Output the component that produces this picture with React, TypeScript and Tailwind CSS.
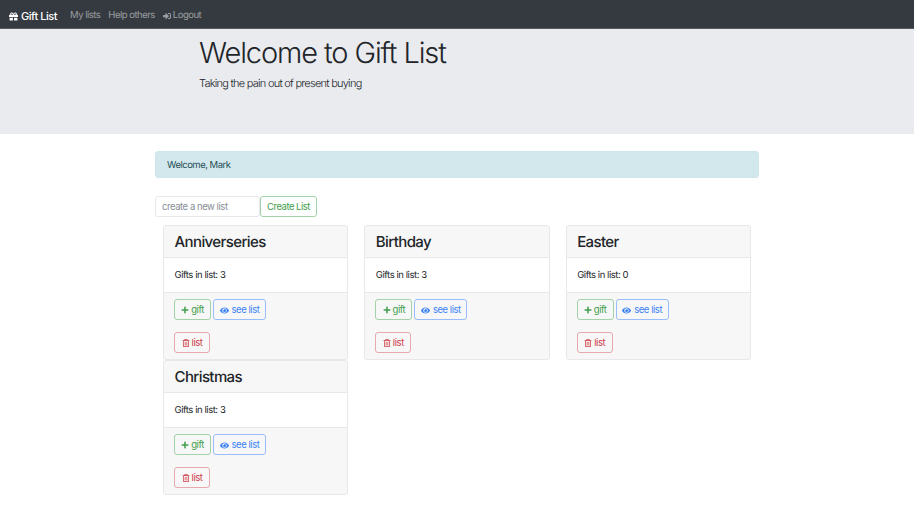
import { FaGift, FaPlus, FaEye, FaRegTrashAlt, FaSignInAlt } from "react-icons/fa";

const lists = [
  { name: "Anniverseries", count: 3 },
  { name: "Birthday", count: 3 },
  { name: "Easter", count: 0 },
  { name: "Christmas", count: 3 },
];

const ListCard = ({ name, count }: { name: string; count: number }) => (
  <div className="mx-2 h-[135px] rounded-[3px] border border-[#e8e8e8] bg-[#f7f7f7]">
    <div className="h-[31px] px-[10.5px] pt-[5px] text-[15px] leading-[22px] font-medium tracking-[-0.6px] text-[#212529]">{name}</div>
    <div className="h-[36px] border-y border-[#e8e8e8] bg-white px-[10.5px] pt-[11px] text-[9.5px] leading-[14px] tracking-[-0.44px] text-[#212529]">
      Gifts in list: {count}
    </div>
    <div className="flex gap-[2px] px-[10px] pt-[6px] text-[9.5px] tracking-[-0.45px]">
      <button className="flex h-[21px] w-[37px] items-center justify-center gap-[2px] rounded-[3px] border border-[#a3d1a9] pt-[1px] text-[#3f9e4b]">
        <FaPlus className="h-[8px] w-[8px]" /> gift
      </button>
      <button className="flex h-[21px] w-[53px] items-center justify-center gap-[3px] rounded-[3px] border border-[#99bdfb] pt-[1px] text-[#3b82f6]">
        <FaEye className="h-[9px] w-[9px]" /> see list
      </button>
    </div>
    <div className="flex px-[10px] pt-[12px] text-[9.5px] tracking-[-0.45px]">
      <button className="flex h-[21px] w-[36px] items-center justify-center gap-[2px] rounded-[3px] border border-[#e8a9ae] pt-[1px] text-[#d0404c]">
        <FaRegTrashAlt className="h-[8px] w-[8px]" /> list
      </button>
    </div>
  </div>
);

export default function App() {
  return (
    <div className="min-h-[514px] bg-white font-['Inter',sans-serif] [text-rendering:geometricPrecision]">
      <nav className="flex h-[29px] items-center border-b border-[#555a60] bg-[#343a40] pt-[4px] pl-[9px]">
        <span className="flex items-center gap-[3px] text-[11px] font-medium tracking-[-0.45px] text-white">
          <FaGift className="h-[9px] w-[9px]" /> Gift List
        </span>
        <div className="ml-[13px] flex items-center gap-[8px] text-[9.5px] tracking-[-0.5px] text-white/50">
          <span>My lists</span>
          <span>Help others</span>
          <span className="flex items-center gap-[2px]">
            <FaSignInAlt className="h-[8px] w-[8px]" /> Logout
          </span>
        </div>
      </nav>
      <header className="h-[105px] bg-[#eaebef] pl-[199px] pt-[4px] text-[#212529]">
        <h1 className="text-[29px] leading-[40px] font-light tracking-[-1.1px]">Welcome to Gift List</h1>
        <p className="mt-[2px] text-[11px] leading-[16px] font-light tracking-[-0.75px]">Taking the pain out of present buying</p>
      </header>
      <main className="mx-auto w-[604px] pt-[17px]">
        <div className="h-[27px] rounded-[3px] border border-[#cfe6eb] bg-[#d3e8ed] px-[11px] text-[9.5px] leading-[27px] tracking-[-0.5px] text-[#1f4e55]">
          Welcome, Mark
        </div>
        <form className="mt-[18px] flex">
          <input
            placeholder="create a new list"
            className="h-[21px] w-[105px] rounded-[3px] border border-[#e6e8eb] px-[6px] text-[9.5px] tracking-[-0.45px] placeholder:text-[#868e96]"
          />
          <button type="button" className="h-[21px] w-[57px] rounded-[3px] border border-[#a3d1a9] pt-[1px] text-[9.5px] tracking-[-0.5px] text-[#3f9e4b]">
            Create List
          </button>
        </form>
        <div className="mt-[8px] grid grid-cols-3">
          {lists.map((list) => (
            <ListCard key={list.name} {...list} />
          ))}
        </div>
      </main>
    </div>
  );
}
